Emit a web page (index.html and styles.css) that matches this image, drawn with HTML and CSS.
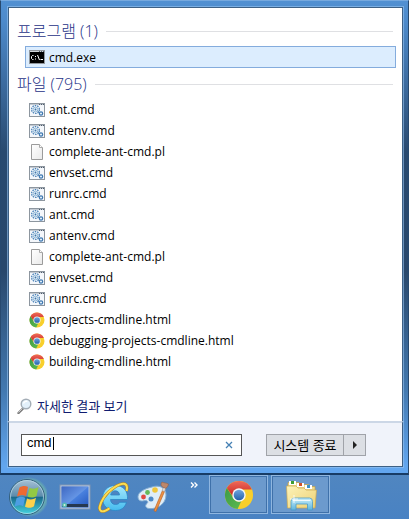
FILE: index.html
```
<!DOCTYPE html>
<html lang="ko">
<head>
  <meta charset="UTF-8">
  <meta name="viewport" content="width=device-width, initial-scale=1.0">
  <title>시작 메뉴</title>
  <link rel="stylesheet" href="styles.css">
</head>
<body>
  <!-- shared icons -->
  <svg class="sprite" aria-hidden="true">
    <defs>
      <linearGradient id="pageFill" x1="0" y1="0" x2="1" y2="1">
        <stop offset="0" stop-color="#fff"/>
        <stop offset="1" stop-color="#e9e9e9"/>
      </linearGradient>
      <linearGradient id="chromeRed" x1="0" y1="0" x2="0" y2="1">
        <stop offset="0" stop-color="#ef6a5c"/>
        <stop offset="1" stop-color="#c4201c"/>
      </linearGradient>
      <linearGradient id="chromeGreen" x1="0" y1="0" x2="1" y2="1">
        <stop offset="0" stop-color="#3d9a45"/>
        <stop offset="1" stop-color="#5cba50"/>
      </linearGradient>
      <linearGradient id="chromeBlue" x1="0" y1="0" x2="0" y2="1">
        <stop offset="0" stop-color="#6fa6dd"/>
        <stop offset="1" stop-color="#2460ac"/>
      </linearGradient>
      <symbol id="batch" viewBox="0 0 16 16">
        <rect x=".5" y="1.5" width="15" height="13" fill="#f4f7fb" stroke="#8d969f"/>
        <path d="M1 2.500h14" stroke="#c3cad2"/>
        <path d="M10 2.500h1M12 2.500h1M14 2.500h1" stroke="#4f5c6c"/>
        <circle cx="6.500" cy="7.500" r="3.900" fill="none" stroke="#4a82b8" stroke-width="1.300" stroke-dasharray="1.500 .95"/>
        <circle cx="6.500" cy="7.500" r="2.400" fill="#dcebf6" stroke="#83add1" stroke-width=".8"/>
        <circle cx="6.500" cy="7.500" r=".9" fill="#3f73a8"/>
        <circle cx="12" cy="11.500" r="1.700" fill="#e3eff8" stroke="#3f78b0" stroke-width="1.200"/>
        <path d="M8.500 9l2 1.500" stroke="#4a82b8"/>
      </symbol>
      <symbol id="page" viewBox="0 0 16 16">
        <path d="M2.500 .5h8l3 3v12h-11z" fill="url(#pageFill)" stroke="#9b9b9b"/>
        <path d="M10.500 .5v3h3" fill="#fff" stroke="#aaa"/>
      </symbol>
      <symbol id="chrome" viewBox="0 0 32 32">
        <circle cx="16" cy="16" r="15" fill="#f8cf2c"/>
        <path d="M3 8.500A15 15 0 0 1 29.700 10H16a6.500 6.500 0 0 0-6 8.500z" fill="url(#chromeRed)"/>
        <path d="M3 8.500l7.200 11a6.800 6.800 0 0 0 8.300 3L14.500 31A15 15 0 0 1 3 8.500z" fill="url(#chromeGreen)"/>
        <circle cx="16" cy="16" r="7.200" fill="#f4f6f8"/>
        <circle cx="16" cy="16" r="5.700" fill="url(#chromeBlue)"/>
      </symbol>
    </defs>
  </svg>

  <main class="menu">
    <section class="results">
      <h2 class="group-title">프로그램 (1)</h2>
      <ul class="list">
        <li><a class="item selected" href="#">
          <svg class="icon" viewBox="0 0 16 16">
            <rect x=".5" y="1.500" width="15" height="13" fill="#000" stroke="#92989e"/>
            <path d="M1 2.500h14" stroke="#d4d8dc"/>
            <path d="M10 2.500h1M12 2.500h1M14 2.500h1" stroke="#56606c"/>
            <path d="M4.500 6.500h-1l-1 1v2l1 1h1M6.500 7v1M6.500 9.500v1M8.500 6l2 5M11.500 10.500h2.500" fill="none" stroke="#fff"/>
          </svg>cmd.exe</a></li>
      </ul>

      <h2 class="group-title">파일 (795)</h2>
      <ul class="list">
        <li><a class="item" href="#"><svg class="icon"><use href="#batch"/></svg>ant.cmd</a></li>
        <li><a class="item" href="#"><svg class="icon"><use href="#batch"/></svg>antenv.cmd</a></li>
        <li><a class="item" href="#"><svg class="icon"><use href="#page"/></svg>complete-ant-cmd.pl</a></li>
        <li><a class="item" href="#"><svg class="icon"><use href="#batch"/></svg>envset.cmd</a></li>
        <li><a class="item" href="#"><svg class="icon"><use href="#batch"/></svg>runrc.cmd</a></li>
        <li><a class="item" href="#"><svg class="icon"><use href="#batch"/></svg>ant.cmd</a></li>
        <li><a class="item" href="#"><svg class="icon"><use href="#batch"/></svg>antenv.cmd</a></li>
        <li><a class="item" href="#"><svg class="icon"><use href="#page"/></svg>complete-ant-cmd.pl</a></li>
        <li><a class="item" href="#"><svg class="icon"><use href="#batch"/></svg>envset.cmd</a></li>
        <li><a class="item" href="#"><svg class="icon"><use href="#batch"/></svg>runrc.cmd</a></li>
        <li><a class="item" href="#"><svg class="icon"><use href="#chrome"/></svg>projects-cmdline.html</a></li>
        <li><a class="item" href="#"><svg class="icon"><use href="#chrome"/></svg>debugging-projects-cmdline.html</a></li>
        <li><a class="item" href="#"><svg class="icon"><use href="#chrome"/></svg>building-cmdline.html</a></li>
      </ul>

      <a class="more" href="#">
        <svg class="icon" viewBox="0 0 16 16">
          <path d="M6 10.500l-4.500 4.500" stroke="#777" stroke-width="2.400" stroke-linecap="round"/>
          <path d="M5.500 10.500l-4 4" stroke="#c9c9c9"/>
          <circle cx="9" cy="6" r="4.800" fill="#e2f0fa" stroke="#a3adb6" stroke-width="1.400"/>
          <path d="M6.500 5.500a3 3 0 0 1 4-2" fill="none" stroke="#fff" stroke-width="1.400"/>
        </svg>자세한 결과 보기</a>
    </section>

    <form class="search">
      <div class="search-box">
        <input class="search-input" type="text" value="cmd" aria-label="프로그램 및 파일 검색">
        <span class="caret"></span>
        <button class="clear" type="button" aria-label="지우기">
          <svg viewBox="0 0 8 8" width="8" height="8"><path d="M1 1l6 6M7 1l-6 6" stroke="#4580b4" stroke-width="1.300"/></svg>
        </button>
      </div>
      <div class="power">
        <button class="shutdown" type="button">시스템 종료</button>
        <button class="options" type="button" aria-label="종료 옵션">
          <svg viewBox="0 0 4 8" width="4" height="8"><path d="M0 0l4 4-4 4z" fill="#222"/></svg>
        </button>
      </div>
    </form>
  </main>

  <footer class="taskbar">
    <button class="start" type="button" aria-label="시작">
      <svg viewBox="0 0 40 40" width="40" height="40">
        <defs>
          <linearGradient id="orb" x1="0" y1="0" x2="0" y2="1">
            <stop offset="0" stop-color="#a9c2d6"/>
            <stop offset=".48" stop-color="#5a8bab"/>
            <stop offset=".5" stop-color="#196789"/>
            <stop offset="1" stop-color="#45d6e0"/>
          </linearGradient>
          <radialGradient id="orbGlow">
            <stop offset=".7" stop-color="#8ce0a0" stop-opacity=".8"/>
            <stop offset="1" stop-color="#8ce0a0" stop-opacity="0"/>
          </radialGradient>
        </defs>
        <circle cx="22" cy="20" r="20" fill="url(#orbGlow)"/>
        <circle cx="20" cy="20" r="17.500" fill="url(#orb)" stroke="#34607f"/>
        <circle cx="20" cy="20" r="16.500" fill="none" stroke="#b9dbe8" stroke-opacity=".7"/>
        <path d="M12.500 10.500c3-2 6-2 8.500-.5l-2 9c-3-1.500-6-1.300-9 .5z" fill="#ee6a31"/>
        <path d="M22.500 10.700c3 1.500 6 1.300 9-.7l-2 9c-3 2-6 2-9 .5z" fill="#92c944"/>
        <path d="M9.500 21.200c3-2 6-2 8.700-.5l-2 8.500c-3-1.500-5.700-1.300-8.700 .5z" fill="#4d9ee2"/>
        <path d="M20 21.500c3 1.500 6 1.300 9-.7l-2 8.500c-3 2-6 2-9 .5z" fill="#fbd14b"/>
      </svg>
    </button>
    <nav class="quick">
      <button class="launch" type="button" aria-label="바탕 화면 보기">
        <svg viewBox="0 0 32 32" width="32" height="32">
          <defs>
            <linearGradient id="desk" x1="0" y1="0" x2="1" y2="1">
              <stop offset="0" stop-color="#1f4fb8"/>
              <stop offset=".5" stop-color="#4b83e0"/>
              <stop offset="1" stop-color="#2456bd"/>
            </linearGradient>
          </defs>
          <rect x="1" y="4" width="30" height="24" fill="#b8c9de" stroke="#8095b4"/>
          <rect x="2.500" y="5.500" width="27" height="21" fill="url(#desk)"/>
          <path d="M3 6h26L9 23H3z" fill="#fff" opacity=".14"/>
          <rect x="3" y="23" width="26" height="3" fill="#263850"/>
          <circle cx="5.500" cy="24" r="2.500" fill="#55b8b6"/>
          <circle cx="5.500" cy="24" r="1" fill="#d9f3d3"/>
        </svg>
      </button>
      <button class="launch" type="button" aria-label="Internet Explorer">
        <svg viewBox="0 0 32 32" width="32" height="32">
          <defs>
            <linearGradient id="ie" x1="0" y1="0" x2="0" y2="1">
              <stop offset="0" stop-color="#a5e9fd"/>
              <stop offset="1" stop-color="#45bbee"/>
            </linearGradient>
          </defs>
          <path d="M29.500 18.500H12.500c.2 3.200 2.200 5 5 5 2 0 3.500-.7 4.300-2.200H28.500c-1.600 5.500-5.500 8.200-11.200 8.200C10 29.500 4.500 25 4.500 17.300S10 4.500 17.300 4.500C25.500 4.500 30 10 29.500 18.500zM12.700 14H21.500c-.2-2.700-1.800-4.200-4.300-4.200-2.500 0-4.200 1.600-4.500 4.200z" fill="url(#ie)" stroke="#2b87c6" stroke-width=".8"/>
          <path d="M28.500 10c1-3.500 .6-6-1.500-7C22.500 1.300 11 8.500 5.500 17 1.500 23.500 .5 28.500 3 30c2 1 5.500-.5 8.500-2.800" fill="none" stroke="#b9861b" stroke-width="3"/>
          <path d="M28.500 10c1-3.500 .6-6-1.500-7C22.500 1.300 11 8.500 5.500 17 1.500 23.500 .5 28.500 3 30c2 1 5.500-.5 8.500-2.800" fill="none" stroke="#fbdc51" stroke-width="2"/>
        </svg>
      </button>
      <button class="launch" type="button" aria-label="그림판">
        <svg viewBox="0 0 32 32" width="32" height="32">
          <path d="M15 6c7-2.500 14 .5 14 8 0 9-9 14.500-17 13.500-4-.5-4-3.500-2-5 2-1.800 0-3.500-3-2.800-4 1-6-.7-6-4C1 11 8 7.500 15 6z" fill="#deedf8" stroke="#86afd2"/>
          <circle cx="6.500" cy="16" r="2.400" fill="#e04a43"/>
          <circle cx="10.500" cy="11.500" r="2.400" fill="#65ba58"/>
          <circle cx="18" cy="9" r="2.800" fill="#efc63c"/>
          <circle cx="14" cy="18" r="2.500" fill="#4d89c5"/>
          <path d="M25.500 9.500l2 1L19 30.500l-2-.8z" fill="#ee9144" stroke="#bd6526" stroke-width=".7"/>
          <path d="M25 9.500l2.500 1.200 1.200-3.500-2-1z" fill="#ddd" stroke="#9a8f88" stroke-width=".5"/>
          <path d="M26.500 6.500C23 5 24 2 25 1c2 1.200 4 .5 6.500 2-.5 2.500-1.500 3.500-2.700 4.300z" fill="#bd876a" stroke="#966044" stroke-width=".6"/>
        </svg>
      </button>
    </nav>
    <button class="overflow" type="button" aria-label="더 보기">
      <svg viewBox="0 0 8 6" width="8" height="6"><path d="M1 .5L3.500 3 1 5.500M4.500 .5L7 3 4.500 5.500" fill="none" stroke="#fff" stroke-width="1.400"/></svg>
    </button>
    <div class="tasks">
      <button class="task" type="button" aria-label="Chrome">
        <svg width="30" height="30"><use href="#chrome"/></svg>
      </button>
      <button class="task" type="button" aria-label="탐색기">
        <svg viewBox="0 0 34 32" width="34" height="32">
          <defs>
            <linearGradient id="folder" x1="0" y1="0" x2="1" y2="1">
              <stop offset="0" stop-color="#fdf3b9"/>
              <stop offset="1" stop-color="#ecd074"/>
            </linearGradient>
            <linearGradient id="stand" x1="0" y1="0" x2="0" y2="1">
              <stop offset="0" stop-color="#c9effa"/>
              <stop offset="1" stop-color="#5db4dd"/>
            </linearGradient>
          </defs>
          <path d="M4 28V3.500h11l1.500 2h8l1.500 2h5V28z" fill="#f0da8c" stroke="#bf9e4d" stroke-width=".7"/>
          <path d="M5 2h7v4H5z" fill="#fff"/><path d="M7 2h3v3H7z" fill="#3c9d31"/>
          <path d="M13 4h7v4h-7z" fill="#fff"/><path d="M15 4h3v3h-3z" fill="#d05228"/>
          <path d="M21 6h7v4h-7z" fill="#fff"/><path d="M23 6h3v3h-3z" fill="#3b93c8"/>
          <path d="M2.500 7H12l2 2h6l2 2h10.500l-1.500 18H3.500z" fill="url(#folder)" stroke="#c9a755" stroke-width=".7"/>
          <path d="M7 31v-8.500q0-3.500 3-3.500h15.500q3 0 3 3.500V31h-5v-6H12v6z" fill="url(#stand)" stroke="#4a9bc6" stroke-width=".8"/>
          <path d="M9 21.500h17.500" stroke="#fff" stroke-opacity=".8"/>
          <path d="M10 16v8M6 20h8" stroke="#fff" stroke-width=".8"/>
        </svg>
      </button>
    </div>
  </footer>
</body>
</html>
```

FILE: styles.css
```
* {
  box-sizing: border-box;
}
body {
  margin: 0;
  min-height: 100vh;
  display: flex;
  flex-direction: column;
  font-family: "Open Sans", "Noto Sans CJK KR", sans-serif;
  font-size: 12px;
  color: #000;
  background-color: #4b82be;
}
button {
  display: flex;
  align-items: center;
  justify-content: center;
  padding: 0;
  border: 0;
  background: none;
  color: inherit;
  font: inherit;
}
a {
  color: inherit;
  text-decoration: none;
}
.sprite {
  position: absolute;
  width: 0;
  height: 0;
}

/* menu window */
.menu {
  flex: 1;
  display: flex;
  flex-direction: column;
  padding: 6px 5px 6px 7px;
  border: 1px solid #27496f;
  border-top-color: #77a9de;
  border-bottom: 2px solid #173c66;
  background: linear-gradient(#5190d2 0, #4d8acb 20px, #294a70 150px, #29486c 270px, #4379b0 390px, #62a6ef 465px);
}
.results {
  flex: 1;
  display: flex;
  flex-direction: column;
  padding: 8px 6px 5px 8px;
  border: 1px solid #3d6085;
  border-bottom: 0;
  outline: 1px solid rgba(150, 195, 240, 0.6);
  background-color: #fff;
}
.group-title {
  display: flex;
  align-items: center;
  gap: 8px;
  height: 30px;
  margin: 0;
  padding-right: 3px;
  font-size: 16px;
  font-weight: 300;
  line-height: 20px;
  color: #1e3287;
}
.group-title::after {
  content: "";
  flex: 1;
  height: 1px;
  background-color: #dfe0e3;
}
.list {
  margin: 0;
  padding: 0 0 1px 8px;
  list-style: none;
}
.item {
  display: flex;
  align-items: center;
  gap: 4px;
  height: 21px;
  padding-left: 4px;
}
.item.selected {
  height: 22px;
  padding-left: 3px;
  border: 1px solid #84acdd;
  background-color: #dcedfe;
}
.icon {
  flex: none;
  width: 16px;
  height: 16px;
}
.more {
  display: flex;
  align-items: center;
  gap: 4px;
  height: 21px;
  margin-top: auto;
  font-size: 13px;
  line-height: 16px;
  color: #101c70;
}

/* search row */
.search {
  display: flex;
  align-items: center;
  gap: 24px;
  height: 46px;
  padding: 0 36px 0 12px;
  border: 1px solid #3d6085;
  border-top: 2px solid #ccd7e6;
  outline: 1px solid rgba(150, 195, 240, 0.6);
  clip-path: inset(0 -1px -1px -1px);
  background-color: #f0f3fa;
}
.search-box {
  position: relative;
  flex: 1;
  display: flex;
  height: 22px;
  border: 1px solid #555;
  background-color: #fff;
}
.search-input {
  flex: 1;
  min-width: 0;
  padding: 0 0 4px 5px;
  border: 0;
  outline: 0;
  background: none;
  font-family: "Liberation Sans", sans-serif;
  font-size: 13px;
}
.caret {
  position: absolute;
  top: 2px;
  left: 31px;
  width: 1px;
  height: 13px;
  background-color: #000;
}
.clear {
  width: 24px;
}
.power {
  display: flex;
  height: 22px;
  border: 1px solid #a0a3a9;
  background-color: #dcdfe4;
}
.shutdown {
  width: 76px;
  font-size: 13px;
  line-height: 16px;
}
.options {
  width: 22px;
  border-left: 1px solid #a0a3a9;
}

/* taskbar */
.taskbar {
  display: flex;
  align-items: flex-start;
  height: 44px;
  padding-left: 7px;
  background: linear-gradient(#5086c0, #4982c3);
}
.start {
  height: 44px;
}
.quick {
  display: flex;
  gap: 7px;
  padding: 6px 0 0 12px;
}
.overflow {
  margin: 7px 11px 0 21px;
}
.tasks {
  display: flex;
  gap: 3px;
}
.task {
  width: 59px;
  height: 39px;
  border: 1px solid #8fb6e0;
  outline: 1px solid #3f71aa;
  outline-offset: -2px;
  background-color: #6c9acd;
}
```
